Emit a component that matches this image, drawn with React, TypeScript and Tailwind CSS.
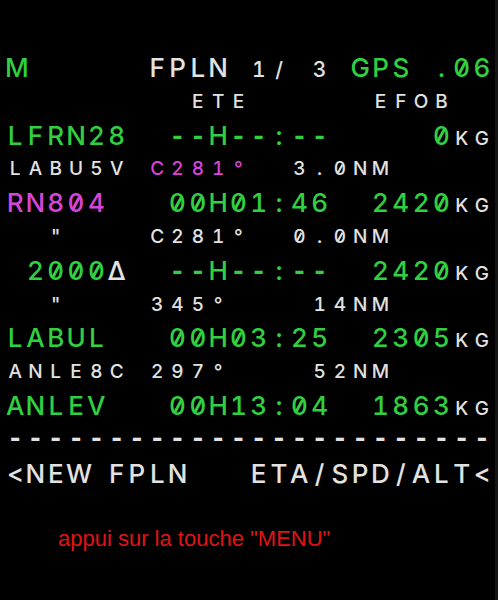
import React from 'react';

type Size = 'L' | 'S' | 'M';
type Seg = [string, 'g' | 'w' | 'm', Size?];

const COLORS: Record<string, string> = {
  g: 'text-[#30d040]',
  w: 'text-[#e2e2e2]',
  m: 'text-[#d844d8]',
};

const SIZES: Record<Size, string> = {
  L: 'text-[26px]',
  S: 'text-[19px]',
  M: 'text-[21px]',
};

// slashed zero like the MCDU font (the installed fonts lack one)
const ZERO =
  "relative after:content-[''] after:absolute after:left-1/2 after:top-1/2 after:-translate-x-1/2 after:-translate-y-1/2 after:w-[0.1em] after:h-[0.52em] after:bg-current after:rotate-[28deg]";

// wide dash, closer to the MCDU glyph than Inter's hyphen
const DASH = "font-['Liberation_Mono',monospace] font-bold text-[28px]";

// each screen line is 24 fixed cells, like the real MCDU grid
const Line: React.FC<{ segs: Seg[] }> = ({ segs }) => {
  const cells: { ch: string; color: string; size: Size }[] = [];
  segs.forEach(([text, color, size]) => {
    for (const ch of text) cells.push({ ch, color, size: size ?? 'L' });
  });
  return (
    <div className="flex items-baseline h-[33.8px] leading-[33.8px] text-[26px]">
      {cells.map((c, i) => {
        const size = c.ch === '-' ? DASH : SIZES[c.size];
        return (
          <span
            key={i}
            className={`inline-block w-[20.3px] shrink-0 text-center ${COLORS[c.color]} ${size} ${
              c.ch === '0' ? ZERO : ''
            }`}
          >
            {c.ch === ' ' ? '\u00a0' : c.ch}
          </span>
        );
      })}
    </div>
  );
};

const rows: Seg[][] = [
  [['M', 'g'], ['      FPLN ', 'w'], ['1/ 3', 'w', 'M'], [' ', 'w'], ['GPS .06', 'g']],
  [['         ETE      EFOB  ', 'w', 'S']],
  [['LFRN28  --H--:--     0', 'g'], ['KG', 'w', 'S']],
  [['LABU5V ', 'w', 'S'], ['C281°', 'm', 'S'], ['  3.0NM     ', 'w', 'S']],
  [['RN804', 'm'], ['   00H01:46  2420', 'g'], ['KG', 'w', 'S']],
  [['  "    C281°  0.0NM     ', 'w', 'S']],
  [[' 2000', 'g'], ['Δ', 'w'], ['  --H--:--  2420', 'g'], ['KG', 'w', 'S']],
  [['  "    345°    14NM     ', 'w', 'S']],
  [['LABUL   00H03:25  2305', 'g'], ['KG', 'w', 'S']],
  [['ANLE8C 297°    52NM     ', 'w', 'S']],
  [['ANLEV   00H13:04  1863', 'g'], ['KG', 'w', 'S']],
  [['------------------------', 'w']],
  [['<NEW FPLN   ETA/SPD/ALT<', 'w']],
];

export default function App() {
  return (
    <div className="w-[498px] h-[600px] bg-black overflow-hidden flex">
      <div className="flex-1 flex flex-col pt-[51px] pl-[5px] font-['Inter',sans-serif] font-medium tabular-nums">
        {rows.map((r, i) => (
          <Line key={i} segs={r} />
        ))}
        <p className="mt-[36px] pl-[53px] font-['Liberation_Sans',Arial,sans-serif] font-normal text-[22px] leading-[26px] text-[#e01414]">
          appui sur la touche "MENU"
        </p>
      </div>
      <div className="w-[3px] bg-[#141414]" />
    </div>
  );
}
